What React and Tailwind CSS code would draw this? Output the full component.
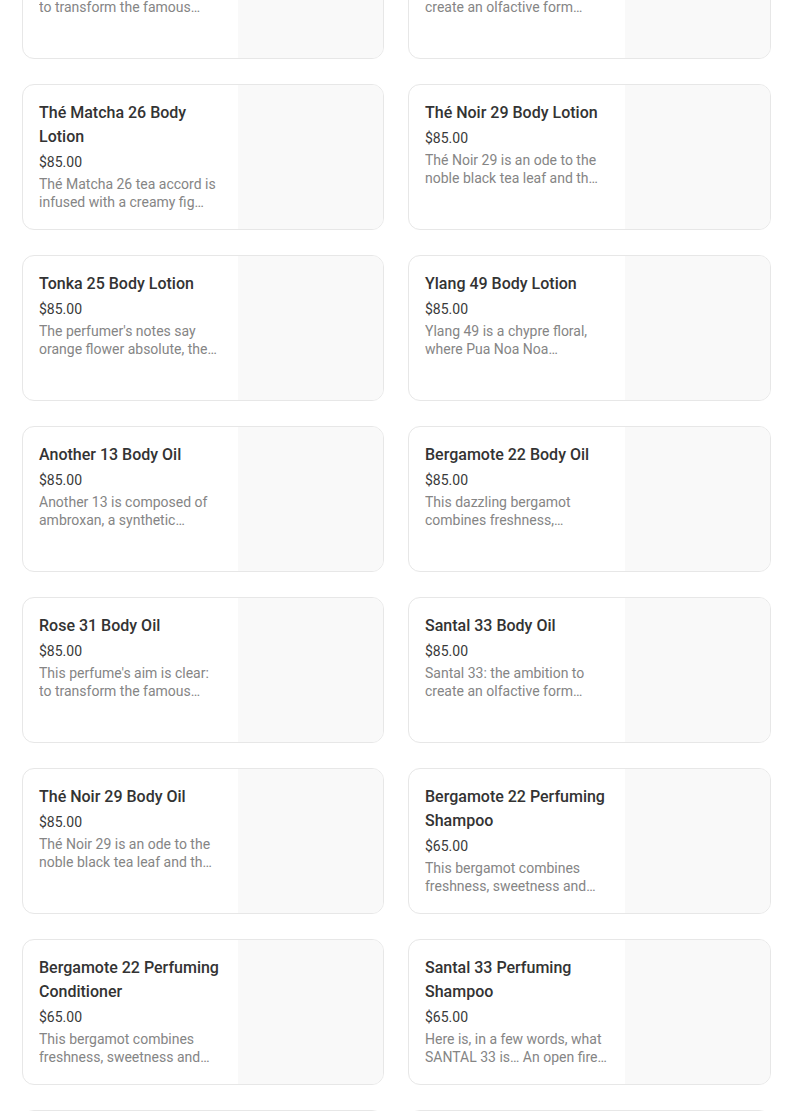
const products = [
  { name: 'Rose 31 Body Lotion', price: '$85.00', desc: "This perfume's aim is clear: to transform the famous…" },
  { name: 'Santal 33 Body Lotion', price: '$85.00', desc: 'Santal 33: the ambition to create an olfactive form…' },
  { name: 'Thé Matcha 26 Body Lotion', price: '$85.00', desc: 'Thé Matcha 26 tea accord is infused with a creamy fig…' },
  { name: 'Thé Noir 29 Body Lotion', price: '$85.00', desc: 'Thé Noir 29 is an ode to the noble black tea leaf and th…' },
  { name: 'Tonka 25 Body Lotion', price: '$85.00', desc: "The perfumer's notes say orange flower absolute, the…" },
  { name: 'Ylang 49 Body Lotion', price: '$85.00', desc: 'Ylang 49 is a chypre floral, where Pua Noa Noa…' },
  { name: 'Another 13 Body Oil', price: '$85.00', desc: 'Another 13 is composed of ambroxan, a synthetic…' },
  { name: 'Bergamote 22 Body Oil', price: '$85.00', desc: 'This dazzling bergamot combines freshness,…' },
  { name: 'Rose 31 Body Oil', price: '$85.00', desc: "This perfume's aim is clear: to transform the famous…" },
  { name: 'Santal 33 Body Oil', price: '$85.00', desc: 'Santal 33: the ambition to create an olfactive form…' },
  { name: 'Thé Noir 29 Body Oil', price: '$85.00', desc: 'Thé Noir 29 is an ode to the noble black tea leaf and th…' },
  { name: 'Bergamote 22 Perfuming Shampoo', price: '$65.00', desc: 'This bergamot combines freshness, sweetness and…' },
  { name: 'Bergamote 22 Perfuming Conditioner', price: '$65.00', desc: 'This bergamot combines freshness, sweetness and…' },
  { name: 'Santal 33 Perfuming Shampoo', price: '$65.00', desc: 'Here is, in a few words, what SANTAL 33 is… An open fire…' },
  { name: 'Another 13 Perfuming Shampoo', price: '$65.00', desc: 'Another 13 is composed of ambroxan, a synthetic…' },
  { name: 'Rose 31 Perfuming Shampoo', price: '$65.00', desc: "This perfume's aim is clear: to transform the famous…" },
]

function ProductCard({ product }) {
  return (
    <div className="flex h-[146px] overflow-hidden rounded-xl border border-[#e7e7e7] bg-white">
      <div className="min-w-0 flex-1 px-4 pt-4">
        <h3 className="text-base leading-6 font-medium text-[#333]">{product.name}</h3>
        <p className="mt-[3px] text-sm leading-5 text-[#3a3a3a]">{product.price}</p>
        <p className="mt-[3px] line-clamp-2 text-sm leading-[18px] text-[#858585]">{product.desc}</p>
      </div>
      <div className="w-[145px] shrink-0 bg-[#f9f9f9]" />
    </div>
  )
}

export default function App() {
  return (
    <div className="min-h-screen overflow-hidden bg-white" style={{ fontFamily: 'Roboto, "Noto Sans", sans-serif' }}>
      <div className="-mt-[87px] ml-[22px] grid grid-cols-[362px_363px] gap-x-6 gap-y-[25px]">
        {products.map((p, i) => (
          <ProductCard key={i} product={p} />
        ))}
      </div>
    </div>
  )
}
